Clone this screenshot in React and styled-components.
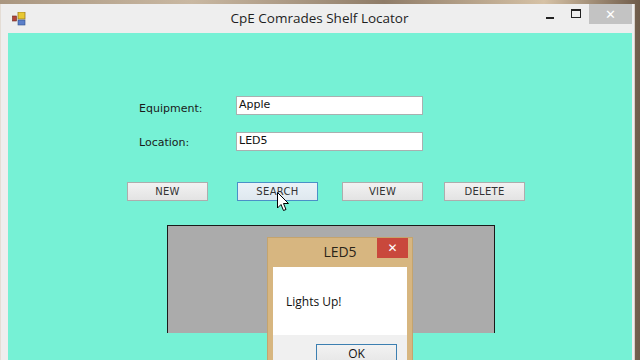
import React from "react";
import styled, { createGlobalStyle } from "styled-components";

const GlobalStyle = createGlobalStyle`
  html, body { margin: 0; padding: 0; width: 640px; height: 360px; overflow: hidden; }
  * { box-sizing: border-box; }
`;

const Desktop = styled.div`
  width: 640px;
  height: 360px;
  overflow: hidden;
  position: relative;
  display: flex;
  padding-top: 4px;
  background: linear-gradient(90deg, #a99680 0%, #c9b8a2 30%, #8f7c68 60%, #d6c2a6 85%, #6e5b49 100%);
`;

const Window = styled.div`
  width: 635px;
  height: 370px;
  display: flex;
  flex-direction: column;
  background: #eeeeee;
  border-left: 1px solid #e4ddd5;
  border-right: 1px solid #d6d0c8;
`;

const TitleBar = styled.div`
  height: 29px;
  display: grid;
  grid-template-columns: 1fr auto 1fr;
  align-items: start;
`;

const AppIcon = styled.svg`
  margin: 8px 0 0 11px;
  width: 14px;
  height: 14px;
`;

const Title = styled.div`
  font-family: "Open Sans", "Noto Sans", sans-serif;
  font-size: 13.5px;
  color: #1e1e1e;
  line-height: 29px;
  padding-left: 4px;
  white-space: nowrap;
`;

const Controls = styled.div`
  display: flex;
  justify-content: flex-end;
  align-items: flex-start;
  margin-right: 2px;
`;

const CtrlBtn = styled.div`
  width: 26px;
  height: 20px;
  display: flex;
  align-items: center;
  justify-content: center;
`;

const MinGlyph = styled.div`
  width: 8px;
  height: 2px;
  background: #222;
  margin-top: 7px;
`;

const MaxGlyph = styled.div`
  width: 10px;
  height: 9px;
  border: 1px solid #222;
  border-top-width: 2px;
  margin-top: -2px;
`;

const CloseBtn = styled.div`
  width: 43px;
  height: 20px;
  background: #c3c3c3;
  color: #fff;
  display: flex;
  align-items: center;
  justify-content: center;
  font-family: "DejaVu Sans", sans-serif;
  font-size: 13px;
  font-weight: bold;
`;

const Client = styled.div`
  flex: 1;
  margin: 0 2px 0 7px;
  background: #76f1d5;
  position: relative;
  display: flex;
  flex-direction: column;
  padding-top: 63px;
`;

const FieldRow = styled.div`
  display: grid;
  grid-template-columns: 97px 187px;
  align-items: center;
  padding-left: 131px;
  margin-bottom: ${(p) => p.$mb}px;
`;

const Label = styled.div`
  font-family: "DejaVu Sans", "Liberation Sans", sans-serif;
  font-size: 11px;
  color: #1a1a1a;
  padding-top: ${(p) => p.$pt}px;
`;

const TextBox = styled.div`
  height: 19px;
  background: #fff;
  border: 1px solid #a9b0b0;
  font-family: "DejaVu Sans", "Liberation Sans", sans-serif;
  font-size: 11px;
  color: #111;
  padding: 1px 0 0 2px;
  line-height: 14px;
`;

const ButtonRow = styled.div`
  display: flex;
  padding-left: 119px;
  margin-bottom: 24px;
`;

const Button = styled.div`
  width: 81px;
  height: 19px;
  margin-left: ${(p) => p.$ml}px;
  border: 1px solid ${(p) => (p.$hover ? "#4a90c8" : "#adadad")};
  background: ${(p) =>
    p.$hover
      ? "linear-gradient(#eaf2f8, #dfe8ef)"
      : "linear-gradient(#f2f2f2, #e3e3e3)"};
  display: flex;
  align-items: center;
  justify-content: center;
  font-family: "DejaVu Sans", "Liberation Sans", sans-serif;
  font-size: 10px;
  color: #333;
  letter-spacing: 0.3px;
`;

const PictureBox = styled.div`
  margin-left: 159px;
  width: 328px;
  height: 108px;
  background: #ababab;
  border: 1px solid #1a1a1a;
  border-bottom: none;
`;

const Dialog = styled.div`
  position: absolute;
  left: 259px;
  top: 204px;
  width: 146px;
  height: 140px;
  background: #d7b680;
  border: 1px solid #c4a46e;
  display: flex;
  flex-direction: column;
  padding: 0 5px;
`;

const DialogTitleBar = styled.div`
  height: 29px;
  position: relative;
  display: flex;
  align-items: center;
  justify-content: center;
  font-family: "Open Sans", "Noto Sans", sans-serif;
  font-size: 14px;
  color: #2a2418;
  padding-bottom: 2px;
`;

const DialogClose = styled.div`
  position: absolute;
  right: -1px;
  top: 0;
  width: 31px;
  height: 20px;
  background: #c9483c;
  color: #fff;
  display: flex;
  align-items: center;
  justify-content: center;
  font-family: "DejaVu Sans", sans-serif;
  font-size: 12px;
  font-weight: bold;
`;

const DialogBody = styled.div`
  height: 68px;
  background: #fff;
  display: flex;
  align-items: center;
  padding-left: 13px;
  font-family: "Open Sans", "Noto Sans", sans-serif;
  font-size: 12px;
  color: #111;
`;

const DialogFooter = styled.div`
  flex: 1;
  background: #f0f0f0;
  display: flex;
  justify-content: flex-end;
  padding: 9px 10px 0 0;
`;

const OkButton = styled.div`
  width: 81px;
  height: 22px;
  border: 1px solid #3c7fb1;
  background: linear-gradient(#f2f2f2, #e5e5e5);
  display: flex;
  align-items: flex-start;
  justify-content: center;
  font-family: "Open Sans", "Noto Sans", sans-serif;
  font-size: 12px;
  line-height: 16px;
  padding-top: 1px;
  color: #111;
`;

const Cursor = styled.svg`
  position: absolute;
  left: 269px;
  top: 159px;
  width: 13px;
  height: 20px;
`;

export default function App() {
  return (
    <>
      <GlobalStyle />
      <Desktop>
        <Window>
          <TitleBar>
            <AppIcon viewBox="0 0 14 14">
              <rect x="6" y="0" width="7" height="7" fill="#e8c832" stroke="#9c7a1e" strokeWidth="0.8" />
              <rect x="0.5" y="4" width="4" height="5" fill="#b3443a" stroke="#6b2a22" strokeWidth="0.6" />
              <rect x="6" y="8" width="7" height="5" fill="#5b7fc9" stroke="#2f4f8a" strokeWidth="0.6" />
            </AppIcon>
            <Title>CpE Comrades Shelf Locator</Title>
            <Controls>
              <CtrlBtn><MinGlyph /></CtrlBtn>
              <CtrlBtn><MaxGlyph /></CtrlBtn>
              <CloseBtn>✕</CloseBtn>
            </Controls>
          </TitleBar>
          <Client>
            <FieldRow $mb={17}>
              <Label $pt={5}>Equipment:</Label>
              <TextBox>Apple</TextBox>
            </FieldRow>
            <FieldRow $mb={31}>
              <Label $pt={1}>Location:</Label>
              <TextBox>LED5</TextBox>
            </FieldRow>
            <ButtonRow>
              <Button $ml={0}>NEW</Button>
              <Button $ml={29} $hover>SEARCH</Button>
              <Button $ml={24}>VIEW</Button>
              <Button $ml={21}>DELETE</Button>
            </ButtonRow>
            <PictureBox />
            <Cursor viewBox="0 0 13 20">
              <path d="M0.5 0.5 L0.5 16 L4 12.5 L6.5 18.5 L9 17.5 L6.5 11.5 L11.5 11.5 Z" fill="#fff" stroke="#000" strokeWidth="1" strokeLinejoin="miter" />
            </Cursor>
            <Dialog>
              <DialogTitleBar>
                LED5
                <DialogClose>✕</DialogClose>
              </DialogTitleBar>
              <DialogBody>Lights Up!</DialogBody>
              <DialogFooter>
                <OkButton>OK</OkButton>
              </DialogFooter>
            </Dialog>
          </Client>
        </Window>
      </Desktop>
    </>
  );
}
